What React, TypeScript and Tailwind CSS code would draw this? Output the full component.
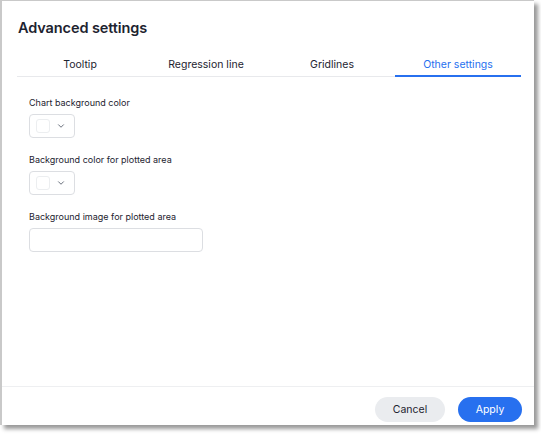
import { ChevronDown } from 'lucide-react'

const tabs = ['Tooltip', 'Regression line', 'Gridlines', 'Other settings']

function ColorPicker() {
  return (
    <div className="flex h-[24px] w-[46px] items-center gap-[6px] rounded-[4px] border border-[#dcdee2] bg-white pl-[6px]">
      <div className="h-[14px] w-[14px] rounded-[3px] border border-[#eceef0] bg-white" />
      <ChevronDown className="h-[10px] w-[10px] text-[#6a717d]" strokeWidth={2.4} />
    </div>
  )
}

export default function App() {
  return (
    <div className="h-[434px] w-[541px] bg-white" style={{ fontFamily: 'Inter, "Noto Sans", sans-serif' }}>
      <div className="flex h-[425px] w-[534px] flex-col border-l-2 border-t border-[#c9c9c9] bg-white shadow-[4px_4px_4px_rgba(0,0,0,0.4)]">
        {/* header */}
        <h1 className="pl-[16px] pt-[15px] text-[14.5px] font-semibold leading-[24px] tracking-[-0.1px] text-[#1d232f]">
          Advanced settings
        </h1>

        {/* tabs */}
        <div className="ml-[15px] mr-[13px] mt-[12px] grid grid-cols-4 border-b border-[#e8e9ec]">
          {tabs.map((t, i) => (
            <div
              key={t}
              className={
                'relative flex h-[24px] items-center justify-center pt-[2px] text-[10.5px] ' +
                (i === 3 ? 'text-[#2770ef]' : 'text-[#1d232f]')
              }
            >
              {t}
              {i === 3 && <div className="absolute bottom-[-1px] left-0 right-0 h-[2px] bg-[#2770ef]" />}
            </div>
          ))}
        </div>

        {/* body */}
        <div className="flex-1 px-[27px] pt-[19px]">
          <div className="text-[9px] leading-[14px] text-[#1d232f]">Chart background color</div>
          <div className="mt-[4px]">
            <ColorPicker />
          </div>

          <div className="mt-[15px] text-[9px] leading-[14px] text-[#1d232f]">Background color for plotted area</div>
          <div className="mt-[4px]">
            <ColorPicker />
          </div>

          <div className="mt-[15px] text-[9px] leading-[14px] text-[#1d232f]">Background image for plotted area</div>
          <div className="mt-[4px] h-[24px] w-[174px] rounded-[4px] border border-[#dcdee2] bg-white" />
        </div>

        {/* footer */}
        <div className="flex h-[39px] items-start justify-end gap-[13px] border-t border-[#eeeff1] pr-[12px] pt-[10px]">
          <button className="h-[25px] w-[70px] rounded-full bg-[#eaecef] text-[10.5px] text-[#1d232f]">Cancel</button>
          <button className="h-[25px] w-[64px] rounded-full bg-[#2770ef] text-[10.5px] text-white">Apply</button>
        </div>
      </div>
    </div>
  )
}
